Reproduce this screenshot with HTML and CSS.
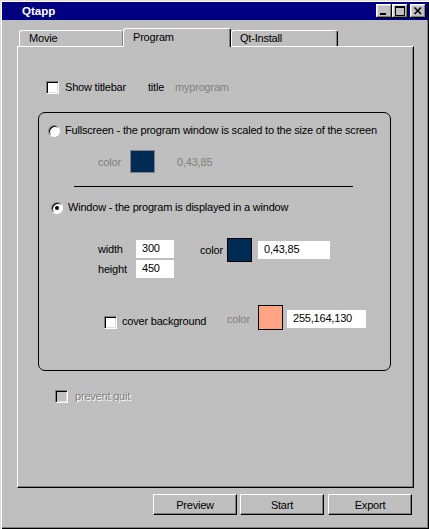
FILE: index.html
```html
<!DOCTYPE html>
<html>
<head>
<meta charset="utf-8">
<link rel="stylesheet" href="styles.css">
</head>
<body>
<div class="window">
  <div class="titlebar">
    <span class="title">Qtapp</span>
    <div class="tb-btn"><svg width="16" height="14" viewBox="0 0 16 14" shape-rendering="crispEdges"><rect x="4" y="9" width="6" height="2" fill="#000"/></svg></div>
    <div class="tb-btn"><svg width="16" height="14" viewBox="0 0 16 14" shape-rendering="crispEdges"><rect x="3" y="2" width="9" height="9" fill="none" stroke="#000" stroke-width="1" transform="translate(0.5 0.5)"/><rect x="3" y="2" width="10" height="2" fill="#000"/></svg></div>
    <div class="tb-btn close"><svg width="16" height="14" viewBox="0 0 16 14"><path d="M4.5 3.5 L11 10 M11 3.5 L4.5 10" stroke="#000" stroke-width="1.6" fill="none"/></svg></div>
  </div>

  <div class="tabs">
    <div class="tab tab-movie">Movie</div>
    <div class="tab tab-program active">Program</div>
    <div class="tab tab-qt">Qt-Install</div>
  </div>

  <div class="panel">
    <div class="row-show">
      <span class="cb"></span>
      <span class="lbl-show">Show titlebar</span>
      <span class="lbl-title">title</span>
      <span class="dim">myprogram</span>
    </div>

    <div class="group">
      <div class="opt opt-full">
        <span class="radio"></span>
        <span class="opt-text">Fullscreen - the program window is scaled to the size of the screen</span>
      </div>
      <div class="row-fullcolor">
        <span class="dim lbl-fcolor">color</span>
        <span class="swatch sw-navy sw-dis"></span>
        <span class="dim fval">0,43,85</span>
      </div>
      <div class="sep"></div>
      <div class="opt opt-win">
        <span class="radio checked"></span>
        <span class="opt-text">Window - the program is displayed in a window</span>
      </div>
      <div class="dims">
        <div class="dims-left">
          <div class="dim-row"><span class="dim-lbl">width</span><input class="field f-small" value="300" readonly></div>
          <div class="dim-row"><span class="dim-lbl">height</span><input class="field f-small" value="450" readonly></div>
        </div>
        <div class="dims-right">
          <span class="lbl-wcolor">color</span>
          <span class="swatch sw-navy sw-big"></span>
          <input class="field f-wcolor" value="0,43,85" readonly>
        </div>
      </div>
      <div class="row-cover">
        <div class="cover-check"><span class="cb cb-cover"></span><span class="cover-text">cover background</span></div>
        <span class="dim lbl-ccolor">color</span>
        <span class="swatch sw-salmon sw-sq"></span>
        <input class="field f-ccolor" value="255,164,130" readonly>
      </div>
    </div>

    <div class="row-prevent">
      <span class="cb cb-dis"></span>
      <span class="etched">prevent quit</span>
    </div>
  </div>

  <div class="buttons">
    <div class="btn">Preview</div>
    <div class="btn">Start</div>
    <div class="btn btn-export">Export</div>
  </div>
</div>
</body>
</html>
```
FILE: styles.css
```css
* { box-sizing: border-box; }
html, body { margin: 0; padding: 0; }
body {
  width: 429px;
  height: 529px;
  overflow: hidden;
  font-family: "Liberation Sans", Arial, sans-serif;
  font-size: 11px;
  letter-spacing: -0.2px;
  color: #000;
}

.window, .tab.active {
  background-color: #c0c0c0;
  background-image: repeating-conic-gradient(#c4c4c4 0 25%, #b9b9b9 0 50%);
  background-size: 2px 2px;
  background-attachment: fixed;
}

.window {
  width: 429px;
  height: 529px;
  padding: 2px 1px 0 2px;
  display: flex;
  flex-direction: column;
  box-shadow: inset 1px 1px #dfdfdf, inset 2px 2px #fff, inset -1px -1px #000, inset -2px -2px #808080;
}

.titlebar {
  height: 18px;
  background: #000080;
  color: #fff;
  display: flex;
  align-items: center;
  padding: 0 2px 0 20px;
  font-weight: bold;
  font-size: 11.5px;
  letter-spacing: 0;
}
.title { flex: 1; }
.tb-btn {
  width: 16px;
  height: 14px;
  background: #c0c0c0;
  box-shadow: inset -1px -1px #000, inset 1px 1px #fff, inset -2px -2px #808080, inset 2px 2px #dfdfdf;
}
.tb-btn svg { display: block; }
.tb-btn.close { margin-left: 2px; }

.tabs {
  margin-top: 8px;
  height: 18px;
  display: flex;
  align-items: flex-end;
  padding-left: 17px;
}
.tab {
  height: 16px;
  border-top: 1px solid #fff;
  border-left: 1px solid #fff;
  border-right: 1px solid #000;
  border-radius: 3px 3px 0 0;
  box-shadow: inset -1px 0 #808080;
  padding-left: 9px;
  line-height: 14px;
  white-space: nowrap;
}
.tab-movie { width: 104px; border-right-color: #808080; box-shadow: none; }
.tab-program { width: 108px; }
.tab-qt { width: 107px; padding-left: 8px; }
.tab.active {
  height: 19px;
  margin-bottom: -1px;
  position: relative;
  z-index: 1;
  line-height: 16px;
}

.panel {
  margin-left: 15px;
  width: 397px;
  height: 442px;
  border-top: 1px solid #fff;
  border-left: 1px solid #fff;
  border-right: 1px solid #000;
  border-bottom: 1px solid #000;
  box-shadow: inset -1px -1px #808080;
}

.cb {
  width: 13px;
  height: 13px;
  flex: none;
  background: #fff;
  border: 1px solid;
  border-color: #808080 #fff #fff #808080;
  box-shadow: inset 1px 1px #000, inset -1px -1px #dfdfdf;
}
.cb-dis { background: #c0c0c0; }

.radio {
  width: 12px;
  height: 12px;
  flex: none;
  border-radius: 50%;
  background: #fff;
  border: 1px solid;
  border-color: #808080 #fff #fff #808080;
  box-shadow: inset 1px 1px #000;
  display: flex;
  align-items: center;
  justify-content: center;
}
.radio.checked::after {
  content: "";
  width: 4px;
  height: 4px;
  border-radius: 50%;
  background: #000;
}

.dim { color: #808080; }
.etched { color: #808080; text-shadow: 1px 1px #fff; }

.row-show {
  display: flex;
  align-items: center;
  height: 13px;
  margin: 34px 0 0 28px;
  line-height: 13px;
}
.lbl-show { width: 83px; margin-left: 6px; }
.lbl-title { width: 27px; }

.group {
  margin: 18px 0 0 20px;
  width: 353px;
  height: 259px;
  border: 1px solid #000;
  border-radius: 7px;
}

.opt {
  display: flex;
  align-items: center;
  height: 13px;
  line-height: 13px;
  white-space: nowrap;
}
.opt-text { margin-left: 5px; }
.opt-full { margin: 11px 0 0 9px; }
.opt-win { margin: 14px 0 0 12px; }

.row-fullcolor {
  display: flex;
  align-items: center;
  height: 23px;
  margin: 13px 0 0 59px;
}
.lbl-fcolor { width: 32px; }
.fval { margin-left: 22px; }

.swatch { flex: none; border: 1px solid #000; }
.sw-navy { background: #002b55; }
.sw-salmon { background: #ffa482; }
.sw-dis { width: 25px; height: 23px; border-color: #808080; }
.sw-big { width: 25px; height: 24px; }
.sw-sq { width: 25px; height: 25px; }

.sep {
  margin: 13px 0 0 35px;
  width: 279px;
  height: 1px;
  background: #000;
}

.dims {
  display: flex;
  margin: 24px 0 0 59px;
}
.dims-left {
  display: flex;
  flex-direction: column;
  gap: 2px;
  margin-top: 2px;
}
.dim-row { display: flex; align-items: center; }
.dim-lbl { width: 38px; }
.dims-right {
  display: flex;
  align-items: center;
  height: 24px;
  margin-left: 26px;
}
.lbl-wcolor { width: 27px; }

.field {
  height: 18px;
  border: 0;
  outline: none;
  background: #fff;
  padding: 0 0 2px 6px;
  margin: 0;
  font: inherit;
  letter-spacing: inherit;
  color: #000;
}
.f-small { width: 38px; }
.f-wcolor { width: 72px; margin-left: 6px; }
.f-ccolor { width: 79px; margin-left: 4px; margin-top: 5px; }

.row-cover {
  display: flex;
  align-items: flex-start;
  margin: 27px 0 0 65px;
}
.cover-check {
  width: 123px;
  display: flex;
  align-items: flex-start;
}
.cb-cover { margin-top: 11px; }
.cover-text { margin: 10px 0 0 5px; line-height: 13px; }
.lbl-ccolor { width: 31px; margin-top: 8px; line-height: 13px; }

.row-prevent {
  display: flex;
  align-items: center;
  height: 13px;
  line-height: 13px;
  margin: 19px 0 0 37px;
}
.row-prevent .etched { margin-left: 7px; }

.buttons {
  display: flex;
  margin: 6px 0 0 151px;
  gap: 3px;
}
.btn {
  width: 84px;
  height: 21px;
  display: flex;
  align-items: center;
  justify-content: center;
  border-top: 1px solid #fff;
  border-left: 1px solid #fff;
  border-right: 1px solid #000;
  border-bottom: 1px solid #000;
  box-shadow: inset -1px -1px #808080;
}
.btn-export { margin-left: 1px; }
```
